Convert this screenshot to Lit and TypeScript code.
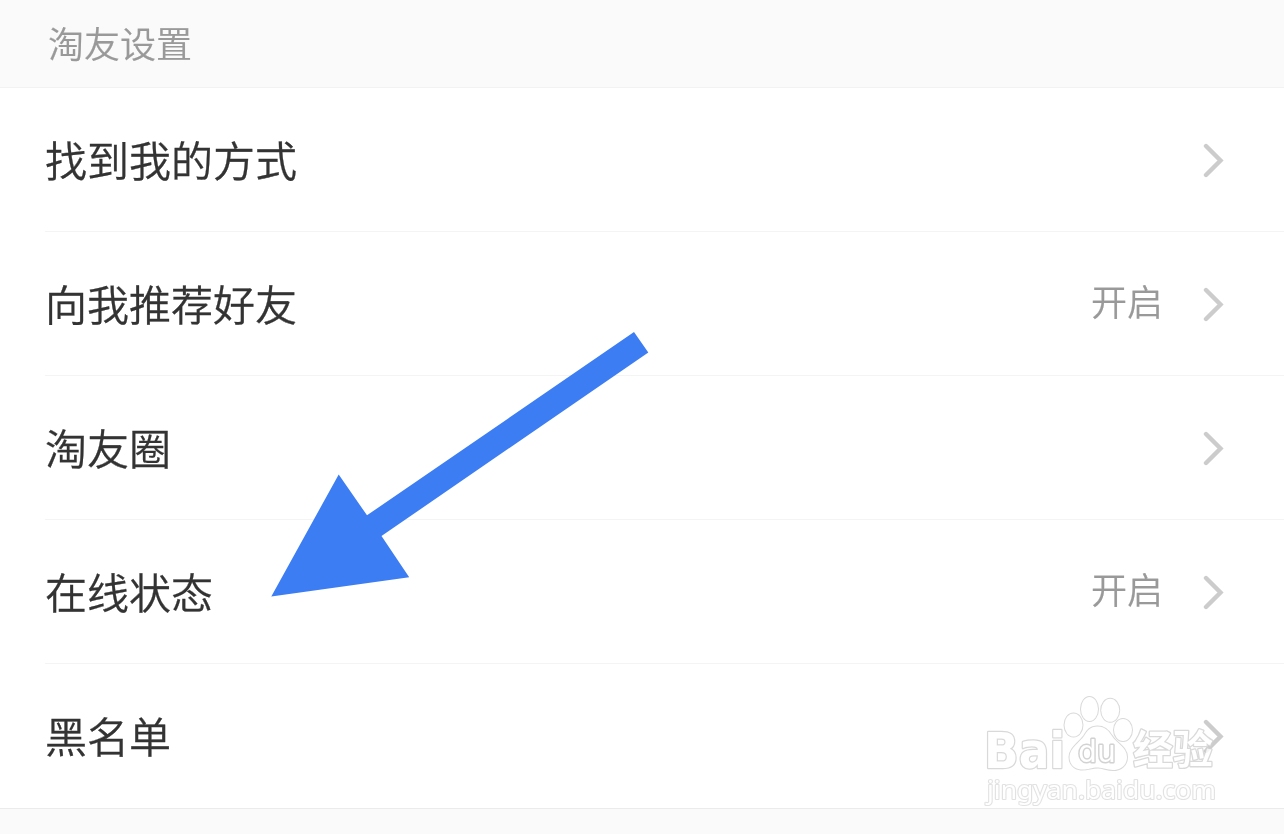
import { LitElement, html, css, nothing } from 'lit';
import { customElement, property } from 'lit/decorators.js';

interface SettingItem {
  label: string;
  value?: string;
}

const ITEMS: SettingItem[] = [
  { label: '找到我的方式' },
  { label: '向我推荐好友', value: '开启' },
  { label: '淘友圈' },
  { label: '在线状态', value: '开启' },
  { label: '黑名单' },
];

/**
 * One row of the settings list
 */
@customElement('setting-row')
export class SettingRow extends LitElement {
  static styles = css`
    :host {
      display: block;
      padding-left: 45px;
    }

    .row {
      display: flex;
      align-items: center;
      box-sizing: border-box;
      height: 144px;
      padding-right: 60px;
      border-bottom: 1px solid #f4f4f4;
    }

    :host(:last-of-type) .row {
      border-bottom-color: transparent;
    }

    .label {
      flex: 1;
      padding-bottom: 1px;
      font-size: 42px;
      line-height: 60px;
      color: #333;
      -webkit-text-stroke: 0.3px #333;
    }

    .value {
      margin-right: 40px;
      padding-bottom: 7px;
      font-size: 36px;
      line-height: 52px;
      color: #999;
      -webkit-text-stroke: 0.2px #999;
    }

    .chevron {
      display: block;
      width: 21px;
      height: 36px;
      margin-top: 3px;
      fill: none;
      stroke: #ccc;
      stroke-width: 4.4;
      stroke-linecap: round;
      stroke-linejoin: miter;
    }
  `;

  @property() label = '';
  @property() value = '';

  render() {
    return html`
      <div class="row">
        <span class="label">${this.label}</span>
        ${this.value ? html`<span class="value">${this.value}</span>` : nothing}
        <svg class="chevron" viewBox="0 0 21 36">
          <path d="M3 3 L17.500 17.500 L3 32" />
        </svg>
      </div>
    `;
  }
}

/**
 * Outlined logo in the bottom corner
 */
@customElement('site-watermark')
export class SiteWatermark extends LitElement {
  static styles = css`
    :host {
      display: block;
    }

    svg {
      display: block;
      width: 244px;
      height: 120px;
      paint-order: stroke;
    }

    .shape {
      fill: #fff;
      stroke: #d0d0d0;
      stroke-width: 2;
    }

    .shape text {
      stroke-width: 2.6;
      stroke-linejoin: round;
    }

    .latin {
      font: bold 49px 'DejaVu Sans', sans-serif;
    }

    .shape .du {
      font: 31px 'DejaVu Sans', sans-serif;
      stroke: #c8c8c8;
      stroke-width: 3;
    }

    .cjk {
      font: bold 40px 'Noto Sans CJK SC', sans-serif;
    }

    .shape .url {
      font: 25px 'Noto Sans', sans-serif;
      stroke: #dcdcdc;
      stroke-width: 2.2;
    }
  `;

  render() {
    return html`
      <svg viewBox="980 690 244 120">
        <g class="shape">
          <ellipse cx="1073.5" cy="725" rx="9" ry="11.5" />
          <ellipse cx="1089.5" cy="709" rx="8.5" ry="12" />
          <ellipse cx="1110.2" cy="710.3" rx="9" ry="11.5" />
          <ellipse cx="1123" cy="730" rx="9" ry="11" />
          <path
            d="M1097.500 726.500 C1105 726.500 1109 731 1112 736 C1116 743 1127 747 1127 757 C1127 766 1120 770 1113 770 C1107 770 1103 767.500 1098 767.500 C1091 767.500 1088 770 1081 769.500 C1074 769 1069.500 764 1069.500 757 C1069.500 748 1080 742 1084 736 C1087 731 1090 726.500 1097.500 726.500 Z"
          />
          <text class="latin" x="984" y="768" textLength="81" lengthAdjust="spacingAndGlyphs">Bai</text>
          <text class="du" x="1078" y="762" textLength="38" lengthAdjust="spacingAndGlyphs">du</text>
          <text class="cjk" x="1133" y="764" textLength="80">经验</text>
          <text class="url" x="987" y="799" textLength="229" lengthAdjust="spacingAndGlyphs">jingyan.baidu.com</text>
        </g>
      </svg>
    `;
  }
}

@customElement('app-root')
export class AppRoot extends LitElement {
  static styles = css`
    :host {
      position: relative;
      display: flex;
      flex-direction: column;
      width: 1284px;
      height: 834px;
      overflow: hidden;
      background: #fafafa;
      font-family: 'Noto Sans CJK SC', sans-serif;
      font-weight: 350;
    }

    .header {
      box-sizing: border-box;
      height: 88px;
      padding: 16px 48px 0;
      border-bottom: 1px solid #f2f2f2;
      font-size: 36px;
      line-height: 52px;
      color: #999;
      -webkit-text-stroke: 0.2px #999;
    }

    .list {
      background: #fff;
      border-bottom: 1px solid #ebebeb;
    }

    .arrow {
      position: absolute;
      left: 260px;
      top: 320px;
      width: 400px;
      height: 290px;
      fill: #3c7df3;
      mix-blend-mode: darken;
    }

    .watermark {
      position: absolute;
      left: 980px;
      top: 690px;
      opacity: 0.8;
    }
  `;

  render() {
    return html`
      <div class="header">淘友设置</div>
      <div class="list">
        ${ITEMS.map(
          (item) => html`<setting-row .label=${item.label} .value=${item.value ?? ''}></setting-row>`
        )}
      </div>
      <svg class="arrow" viewBox="260 320 400 290">
        <path
          d="M271.300 596.500 L338.700 474.500 L367 515.300 L634 332 L648.300 352.500 L381.500 536 L409.200 577.200 Z"
        />
      </svg>
      <site-watermark class="watermark"></site-watermark>
    `;
  }
}
